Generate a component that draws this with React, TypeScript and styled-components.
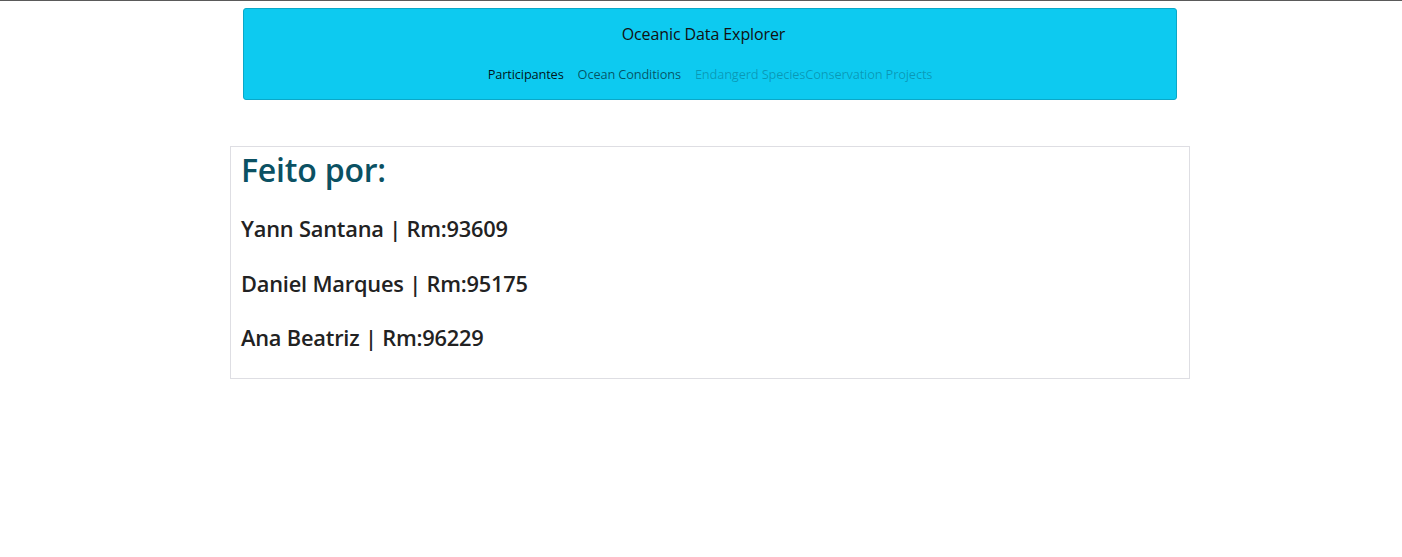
import React from "react";
import styled, { createGlobalStyle } from "styled-components";

const Global = createGlobalStyle`
  html, body { margin: 0; padding: 0; background: #fff; }
  body { font-family: "Open Sans", "Noto Sans", sans-serif; }
`;

const Page = styled.div`
  border-top: 1px solid #5a5a5a;
  min-height: 556px;
  display: flex;
  flex-direction: column;
  align-items: flex-start;
`;

const Navbar = styled.header`
  margin: 7px 0 0 243px;
  width: 934px;
  height: 92px;
  box-sizing: border-box;
  background: #0dcaf0;
  border: 1px solid #0aa8c8;
  border-radius: 3px;
  display: flex;
  flex-direction: column;
  align-items: center;
`;

const Brand = styled.div`
  margin: 15px 13px 0 0;
  font-size: 16px;
  line-height: 20px;
  color: #111;
  letter-spacing: -0.1px;
`;

const Nav = styled.nav`
  margin: 21px 7px 0 0;
  display: flex;
  align-items: center;
  font-size: 12.8px;
  line-height: 18px;
`;

const NavLink = styled.span<{ $tone: "active" | "normal" | "disabled"; $pad?: boolean }>`
  padding: 0 ${(p) => (p.$pad === false ? "0" : "7px")};
  color: ${(p) =>
    p.$tone === "active" ? "rgba(0,0,0,0.9)" : p.$tone === "normal" ? "rgba(0,0,0,0.6)" : "rgba(0,0,0,0.25)"};
  letter-spacing: -0.15px;
`;

const Card = styled.section`
  margin: 46px 0 0 230px;
  width: 960px;
  height: 233px;
  box-sizing: border-box;
  border: 1px solid #dedee3;
  padding: 2px 10px 0 10px;
`;

const Heading = styled.h1`
  margin: 0;
  font-size: 32px;
  line-height: 42px;
  font-weight: 600;
  color: #0b5163;
  letter-spacing: -0.2px;
`;

const Member = styled.h4`
  margin: 21px 0 0 0;
  font-size: 21.8px;
  line-height: 34px;
  font-weight: 600;
  color: #222;
  letter-spacing: -0.2px;
  & + & { margin-top: 20.5px; }
`;

const members = [
  "Yann Santana | Rm:93609",
  "Daniel Marques | Rm:95175",
  "Ana Beatriz | Rm:96229",
];

export default function App() {
  return (
    <>
      <Global />
      <Page>
        <Navbar>
          <Brand>Oceanic Data Explorer</Brand>
          <Nav>
            <NavLink $tone="active">Participantes</NavLink>
            <NavLink $tone="normal">Ocean Conditions</NavLink>
            <NavLink $tone="disabled" style={{ paddingRight: 0 }}>Endangerd Species</NavLink>
            <NavLink $tone="disabled" $pad={false}>Conservation Projects</NavLink>
          </Nav>
        </Navbar>
        <Card>
          <Heading>Feito por:</Heading>
          {members.map((m) => (
            <Member key={m}>{m}</Member>
          ))}
        </Card>
      </Page>
    </>
  );
}
